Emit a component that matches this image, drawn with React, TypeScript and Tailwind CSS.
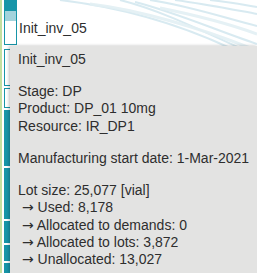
import React from "react";

const Arrow = () => <span className="font-['DejaVu_Sans',sans-serif]">→</span>;

const Swooshes = () => (
  <svg className="absolute left-0 top-0" width="257" height="48" viewBox="0 0 257 48" fill="none">
    <g stroke="#cfe6ee" strokeWidth="2" opacity="0.8">
      <path d="M120 0 C160 10 200 30 240 48" />
      <path d="M135 2 C175 12 215 30 257 44" />
      <path d="M150 0 C190 6 225 18 257 26" />
      <path d="M60 0 C110 6 170 20 230 48" />
      <path d="M175 0 C205 4 235 10 257 14" />
      <path d="M210 0 C230 2 245 5 257 7" />
    </g>
    <g stroke="#e3f0f4" strokeWidth="3" opacity="0.9">
      <path d="M90 4 C140 10 200 28 250 48" />
      <path d="M160 8 C200 16 235 26 257 34" />
    </g>
  </svg>
);

export default function App() {
  return (
    <div className="relative flex h-[273px] w-[257px] overflow-hidden bg-white font-['Liberation_Sans',Arial,sans-serif] text-[14px] leading-[17.4px] text-[#2e2e2e]">
      <Swooshes />
      <div className="h-full w-[2px] shrink-0 bg-[#c4df9f]" />

      {/* gantt bars column */}
      <div className="ml-[2px] flex w-[13px] shrink-0 flex-col">
        <div className="flex h-[45px] flex-col border-x-[1.5px] border-b-[1.5px] border-[#1795a8] bg-white">
          <div className="h-[11px] bg-[#1795a8]" />
          <div className="h-[10px] bg-[#a3d3dc]" />
        </div>
        <div className="mt-[4px] h-[38px] border-[1.5px] border-[#1795a8] bg-white" />
        <div className="mt-[2px] h-[20px] border-[1.5px] border-[#1795a8] bg-white" />
        <div className="mt-[2px] h-[56px] bg-[#1795a8]" />
        <div className="mt-[2px] h-[52px] bg-[#1795a8]" />
        <div className="mt-[2px] h-[22px] bg-[#1795a8]" />
        <div className="mt-[2px] h-[16px] bg-[#1795a8]" />
        <div className="mt-[2px] h-[10px] bg-[#1795a8]" />
      </div>

      <div className="relative pl-[2px] pt-[20px]">Init_inv_05</div>

      {/* tooltip */}
      <div className="absolute bottom-0 left-[10px] right-0 top-[46px] flex flex-col gap-[14.6px] bg-[#e3e3e2] pl-[8px] pt-[5px] shadow-[-1px_0_3px_rgba(0,0,0,0.25)]">
        <div>Init_inv_05</div>
        <div>
          <div>Stage: DP</div>
          <div>Product: DP_01 10mg</div>
          <div>Resource: IR_DP1</div>
        </div>
        <div>Manufacturing start date: 1-Mar-2021</div>
        <div className="whitespace-pre">
          <div>Lot size: 25,077 [vial]</div>
          <div> <Arrow /> Used: 8,178</div>
          <div> <Arrow /> Allocated to demands: 0</div>
          <div> <Arrow /> Allocated to lots: 3,872</div>
          <div> <Arrow /> Unallocated: 13,027</div>
        </div>
      </div>
    </div>
  );
}
